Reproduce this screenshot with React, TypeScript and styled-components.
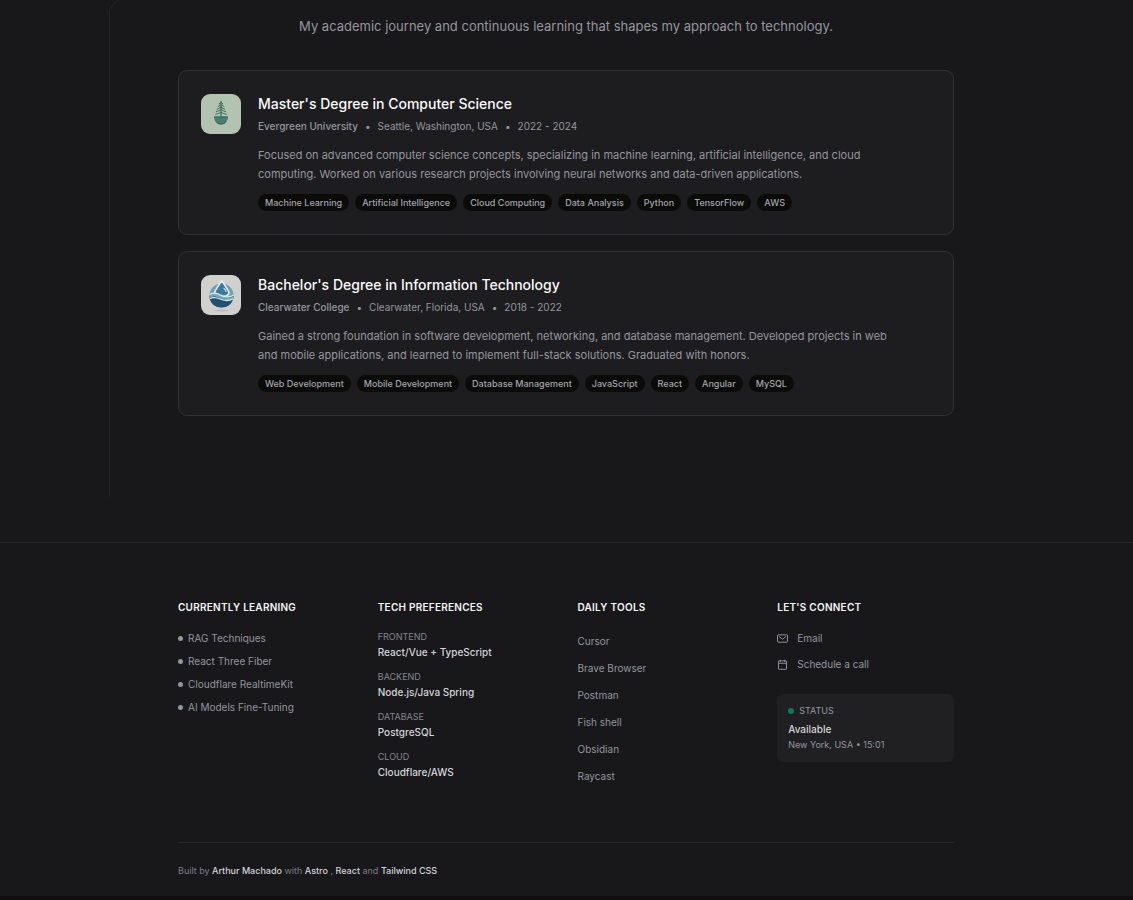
import React from "react";
import styled, { createGlobalStyle } from "styled-components";

const GlobalStyle = createGlobalStyle`
  *, *::before, *::after { box-sizing: border-box; }
  body {
    margin: 0;
    background: #18181a;
    color: #95959e;
    font-family: Inter, "Liberation Sans", sans-serif;
    font-size: 10px;
    line-height: 14px;
    -webkit-font-smoothing: antialiased;
  }
  h2, h3, p, ul, dl, dd { margin: 0; padding: 0; }
  ul { list-style: none; }
  a { color: inherit; text-decoration: none; }
`;

const Page = styled.div`
  border-bottom: 4px solid #120d10;
`;

const Education = styled.section`
  display: grid;
  grid-template-columns: minmax(24px, 1fr) minmax(0, 776px) minmax(24px, 1fr);
  padding: 0 1px 45px 0;
`;

const Beam = styled.div`
  display: flex;
  flex-direction: column;
  align-items: flex-start;
  justify-self: end;
  width: 69px;
`;

const BeamCorner = styled.svg`
  display: block;
`;

const BeamLine = styled.div`
  flex: 1;
  border-left: 1px solid #252527;
`;

const Content = styled.div`
  padding: 16px 0 81px;
`;

const Intro = styled.p`
  font-size: 13px;
  line-height: 20px;
  text-align: center;
  margin-bottom: 34px;
`;

const CardList = styled.div`
  display: flex;
  flex-direction: column;
  gap: 16px;
`;

const Card = styled.article`
  display: flex;
  gap: 17px;
  padding: 23px 22px;
  border: 1px solid #313134;
  border-radius: 9px;
  background: #1d1d1f;
`;

const Logo = styled.svg`
  flex: none;
  display: block;
  border-radius: 9px;
`;

const CardBody = styled.div`
  min-width: 0;
`;

const CardTitle = styled.h3`
  color: #fafafa;
  font-size: 14px;
  font-weight: 500;
  line-height: 20px;
  margin-bottom: 5px;
`;

const Meta = styled.p`
  display: flex;
  flex-wrap: wrap;
  gap: 7px;
  margin-bottom: 13px;
`;

const School = styled.span`
  font-weight: 500;
`;

const Description = styled.p`
  max-width: 640px;
  font-size: 11px;
  line-height: 19px;
  margin-bottom: 10px;
`;

const Tags = styled.ul`
  display: flex;
  flex-wrap: wrap;
  gap: 6px;
`;

const Tag = styled.li`
  padding: 0 7px;
  border-radius: 9px;
  background: #0b0b0a;
  color: #a3a3ab;
  font-size: 9px;
  font-weight: 500;
  line-height: 17px;
`;

const Footer = styled.footer`
  border-top: 1px solid #252527;
  padding: 57px 25px 19px 24px;
`;

const FooterInner = styled.div`
  max-width: 776px;
  margin: 0 auto;
`;

const Columns = styled.div`
  display: grid;
  grid-template-columns: repeat(auto-fit, minmax(160px, 1fr));
  gap: 23px;
  padding-bottom: 56px;
`;

const ColumnTitle = styled.h2`
  color: #f4f4f5;
  font-size: 10px;
  font-weight: 600;
  line-height: 14px;
  letter-spacing: 0.025em;
  text-transform: uppercase;
  margin-bottom: 17px;
`;

const Stack = styled.ul<{ $gap: number }>`
  display: flex;
  flex-direction: column;
  gap: ${(p) => p.$gap}px;
`;

const LearningItem = styled.li`
  display: flex;
  align-items: center;
  gap: 5px;
`;

const Dot = styled.span<{ $size: number; $color: string }>`
  flex: none;
  width: ${(p) => p.$size}px;
  height: ${(p) => p.$size}px;
  border-radius: 50%;
  background: ${(p) => p.$color};
`;

const Preferences = styled.dl`
  display: flex;
  flex-direction: column;
  gap: 12px;
`;

const Label = styled.dt`
  color: #85858e;
  font-size: 9px;
  line-height: 12px;
  text-transform: uppercase;
  margin-bottom: 2px;
`;

const Value = styled.dd`
  color: #d4d4d8;
  font-weight: 500;
`;

const ToolLink = styled.a`
  display: block;
  padding: 3px 0;
`;

const ContactLink = styled.a`
  display: flex;
  align-items: center;
  gap: 9px;
`;

const StatusBox = styled.div`
  margin-top: 23px;
  padding: 11px;
  border-radius: 6px;
  background: #202022;
  font-size: 9px;
  line-height: 12px;
`;

const StatusHead = styled.p`
  display: flex;
  align-items: center;
  gap: 5px;
  text-transform: uppercase;
  margin-bottom: 5px;
`;

const StatusValue = styled.p`
  color: #d4d4d8;
  font-size: 10px;
  font-weight: 500;
  line-height: 14px;
  margin-bottom: 3px;
`;

const Credits = styled.p`
  border-top: 1px solid #252527;
  padding-top: 22px;
  color: #7c7c85;
  font-size: 9px;
  line-height: 12px;
`;

const CreditLink = styled.a`
  color: #d4d4d8;
  font-weight: 500;
`;

const TreeLogo = () => (
  <Logo width="40" height="40" viewBox="0 0 40 40" aria-hidden="true">
    <rect width="40" height="40" fill="#b3c3b2" />
    <g fill="none" stroke="#2b6557" strokeLinecap="round">
      <path d="M20 7.500v15" strokeWidth="1.100" />
      <path
        d="M18.300 9.800 20 8.500l1.700 1.300M17 12.500l3-1.800 3 1.800M16.200 15.200l3.800-2 3.800 2M15.300 17.700l4.700-2 4.700 2M14.800 20.200c2-.3 3.700-1 5.200-2 1.500 1 3.200 1.700 5.200 2"
        strokeWidth="0.900"
      />
    </g>
    <path d="M13 22.500h14c0 4.500-3 8-7 8s-7-3.500-7-8z" fill="#4a7f6e" />
    <path d="M13.300 23h13.400M15 27.500c1.500 2 3 2.500 5 2.500s3.500-.5 5-2.500" fill="none" stroke="#2b6557" strokeWidth="0.900" />
  </Logo>
);

const WaterLogo = () => (
  <Logo width="40" height="40" viewBox="0 0 40 40" aria-hidden="true">
    <rect width="40" height="40" fill="#d0d1cc" />
    <ellipse cx="20.500" cy="35.500" rx="7" ry="0.700" fill="#b3bbbb" />
    <circle cx="20.500" cy="20.500" r="12" fill="#6c9fb4" />
    <path d="M8.500 21c5-3 8-1.500 12 .5s8 2 12-.5c0 7-5.500 11.500-12 11.500S8.500 28 8.500 21z" fill="#234f70" />
    <path d="M20.800 5.500 14 16c-1.200 3.500 1.500 5 6.500 5.500 5 .3 8.500-2 7.200-5z" fill="#387b9f" stroke="#e2e8e6" strokeWidth="1.600" strokeLinejoin="round" />
    <path d="M23 13.500c1 .8 1.800 1.800 2 3" fill="none" stroke="#c4dce3" strokeWidth="1.200" strokeLinecap="round" />
    <path d="M8.500 21.500c5-2.500 8-1 12 1s8 2 12 0" fill="none" stroke="#70a9c0" strokeWidth="2.500" />
    <path
      d="M8.700 19.500c5-2.500 8-1 12 1s8 2 11.800-.5M8.800 23.500c5-2 8-.5 11.700 1s8 1.500 11.700-.8"
      fill="none"
      stroke="#e2e8e6"
      strokeWidth="1.200"
    />
  </Logo>
);

const MailIcon = () => (
  <svg width="11" height="11" viewBox="0 0 15 15" fill="none" stroke="currentColor" aria-hidden="true">
    <rect x="0.700" y="2.500" width="13.600" height="10" rx="0.800" strokeWidth="1.300" />
    <path d="m2.500 4.500 5 4 5-4" strokeWidth="1.300" />
  </svg>
);

const CalendarIcon = () => (
  <svg width="11" height="11" viewBox="0 0 15 15" fill="none" stroke="currentColor" aria-hidden="true">
    <rect x="2" y="2.500" width="11" height="11.500" rx="0.600" strokeWidth="1.300" />
    <path d="M2 5.800h11M4.500 1v3M10.500 1v3" strokeWidth="1.300" />
  </svg>
);

const degrees = [
  {
    logo: <TreeLogo />,
    title: "Master's Degree in Computer Science",
    school: "Evergreen University",
    place: "Seattle, Washington, USA",
    years: "2022 - 2024",
    text: "Focused on advanced computer science concepts, specializing in machine learning, artificial intelligence, and cloud computing. Worked on various research projects involving neural networks and data-driven applications.",
    tags: ["Machine Learning", "Artificial Intelligence", "Cloud Computing", "Data Analysis", "Python", "TensorFlow", "AWS"],
  },
  {
    logo: <WaterLogo />,
    title: "Bachelor's Degree in Information Technology",
    school: "Clearwater College",
    place: "Clearwater, Florida, USA",
    years: "2018 - 2022",
    text: "Gained a strong foundation in software development, networking, and database management. Developed projects in web and mobile applications, and learned to implement full-stack solutions. Graduated with honors.",
    tags: ["Web Development", "Mobile Development", "Database Management", "JavaScript", "React", "Angular", "MySQL"],
  },
];

const learning = ["RAG Techniques", "React Three Fiber", "Cloudflare RealtimeKit", "AI Models Fine-Tuning"];

const preferences = [
  ["Frontend", "React/Vue + TypeScript"],
  ["Backend", "Node.js/Java Spring"],
  ["Database", "PostgreSQL"],
  ["Cloud", "Cloudflare/AWS"],
];

const tools = ["Cursor", "Brave Browser", "Postman", "Fish shell", "Obsidian", "Raycast"];

export default function App() {
  return (
    <>
      <GlobalStyle />
      <Page>
        <Education>
          <Beam aria-hidden="true">
            <BeamCorner width="9" height="10" viewBox="0 0 9 10">
              <path d="M8.500 0 .5 10" fill="none" stroke="#252527" />
            </BeamCorner>
            <BeamLine />
          </Beam>
          <Content>
            <Intro>My academic journey and continuous learning that shapes my approach to technology.</Intro>
            <CardList>
              {degrees.map((d) => (
                <Card key={d.title}>
                  {d.logo}
                  <CardBody>
                    <CardTitle>{d.title}</CardTitle>
                    <Meta>
                      <School>{d.school}</School>
                      <span>•</span>
                      <span>{d.place}</span>
                      <span>•</span>
                      <span>{d.years}</span>
                    </Meta>
                    <Description>{d.text}</Description>
                    <Tags>
                      {d.tags.map((t) => (
                        <Tag key={t}>{t}</Tag>
                      ))}
                    </Tags>
                  </CardBody>
                </Card>
              ))}
            </CardList>
          </Content>
        </Education>
        <Footer>
          <FooterInner>
            <Columns>
              <div>
                <ColumnTitle>Currently Learning</ColumnTitle>
                <Stack $gap={9}>
                  {learning.map((item) => (
                    <LearningItem key={item}>
                      <Dot $size={5} $color="#95959e" />
                      {item}
                    </LearningItem>
                  ))}
                </Stack>
              </div>
              <div>
                <ColumnTitle>Tech Preferences</ColumnTitle>
                <Preferences>
                  {preferences.map(([label, value]) => (
                    <div key={label}>
                      <Label>{label}</Label>
                      <Value>{value}</Value>
                    </div>
                  ))}
                </Preferences>
              </div>
              <div>
                <ColumnTitle>Daily Tools</ColumnTitle>
                <Stack $gap={7}>
                  {tools.map((tool) => (
                    <li key={tool}>
                      <ToolLink href="#">{tool}</ToolLink>
                    </li>
                  ))}
                </Stack>
              </div>
              <div>
                <ColumnTitle>Let's Connect</ColumnTitle>
                <Stack $gap={12}>
                  <li>
                    <ContactLink href="#">
                      <MailIcon />
                      Email
                    </ContactLink>
                  </li>
                  <li>
                    <ContactLink href="#">
                      <CalendarIcon />
                      Schedule a call
                    </ContactLink>
                  </li>
                </Stack>
                <StatusBox>
                  <StatusHead>
                    <Dot $size={6} $color="#087a55" />
                    Status
                  </StatusHead>
                  <StatusValue>Available</StatusValue>
                  <p>New York, USA • 15:01</p>
                </StatusBox>
              </div>
            </Columns>
            <Credits>
              Built by <CreditLink href="#">Arthur Machado</CreditLink> with <CreditLink href="#">Astro</CreditLink> ,{" "}
              <CreditLink href="#">React</CreditLink> and <CreditLink href="#">Tailwind CSS</CreditLink>
            </Credits>
          </FooterInner>
        </Footer>
      </Page>
    </>
  );
}
